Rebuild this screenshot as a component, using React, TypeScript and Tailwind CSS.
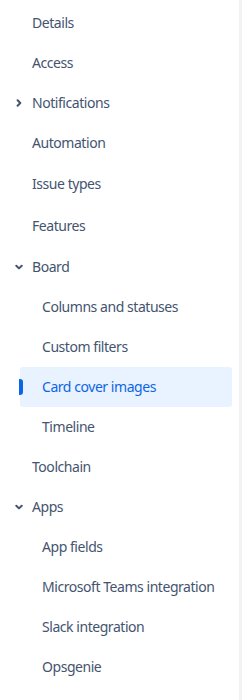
import React from 'react';

type Item = { label: string; level: 0 | 1; chevron?: 'right' | 'down'; active?: boolean; tall?: boolean };

const items: Item[] = [
  { label: 'Details', level: 0 },
  { label: 'Access', level: 0 },
  { label: 'Notifications', level: 0, chevron: 'right' },
  { label: 'Automation', level: 0 },
  { label: 'Issue types', level: 0, tall: true },
  { label: 'Features', level: 0, tall: true },
  { label: 'Board', level: 0, chevron: 'down' },
  { label: 'Columns and statuses', level: 1 },
  { label: 'Custom filters', level: 1 },
  { label: 'Card cover images', level: 1, active: true },
  { label: 'Timeline', level: 1 },
  { label: 'Toolchain', level: 0 },
  { label: 'Apps', level: 0, chevron: 'down' },
  { label: 'App fields', level: 1 },
  { label: 'Microsoft Teams integration', level: 1 },
  { label: 'Slack integration', level: 1 },
  { label: 'Opsgenie', level: 1 },
];

const Chevron: React.FC<{ dir: 'right' | 'down' }> = ({ dir }) => (
  <svg width="8" height="8" viewBox="0 0 8 8" className="absolute left-[-5px] top-1/2 -translate-y-1/2">
    {dir === 'right' ? (
      <path d="M2.6 1.3 L5.3 4 L2.6 6.7" fill="none" stroke="#44546f" strokeWidth="2" strokeLinecap="round" strokeLinejoin="round" />
    ) : (
      <path d="M1.3 2.7 L4 5.4 L6.7 2.7" fill="none" stroke="#44546f" strokeWidth="2" strokeLinecap="round" strokeLinejoin="round" />
    )}
  </svg>
);

export default function App() {
  return (
    <div className="w-[249px] h-[700px] flex bg-white font-['Noto_Sans',sans-serif] text-[14px] tracking-[-0.45px]">
      <nav className="w-[239px] pt-[3px] pl-[20px] pr-[7px] flex flex-col">
        {items.map((it) => (
          <div
            key={it.label}
            className={`relative flex items-center rounded-[3px] ${it.tall ? 'h-[42px]' : 'h-[40px]'} ${
              it.level === 0 ? 'pl-[12px]' : 'pl-[22px]'
            } ${it.active ? 'bg-[#e9f2ff] text-[#0c66e4]' : 'text-[#44546f]'}`}
          >
            {it.chevron && <Chevron dir={it.chevron} />}
            {it.active && (
              <span className="absolute left-[-1px] top-[12px] w-[4px] h-[16px] rounded-r-[3px] bg-[#0c66e4]" />
            )}
            <span className="whitespace-nowrap pb-[2px]">{it.label}</span>
          </div>
        ))}
      </nav>
      <div className="w-[3px] h-full bg-[#f1f2f4]" />
    </div>
  );
}
